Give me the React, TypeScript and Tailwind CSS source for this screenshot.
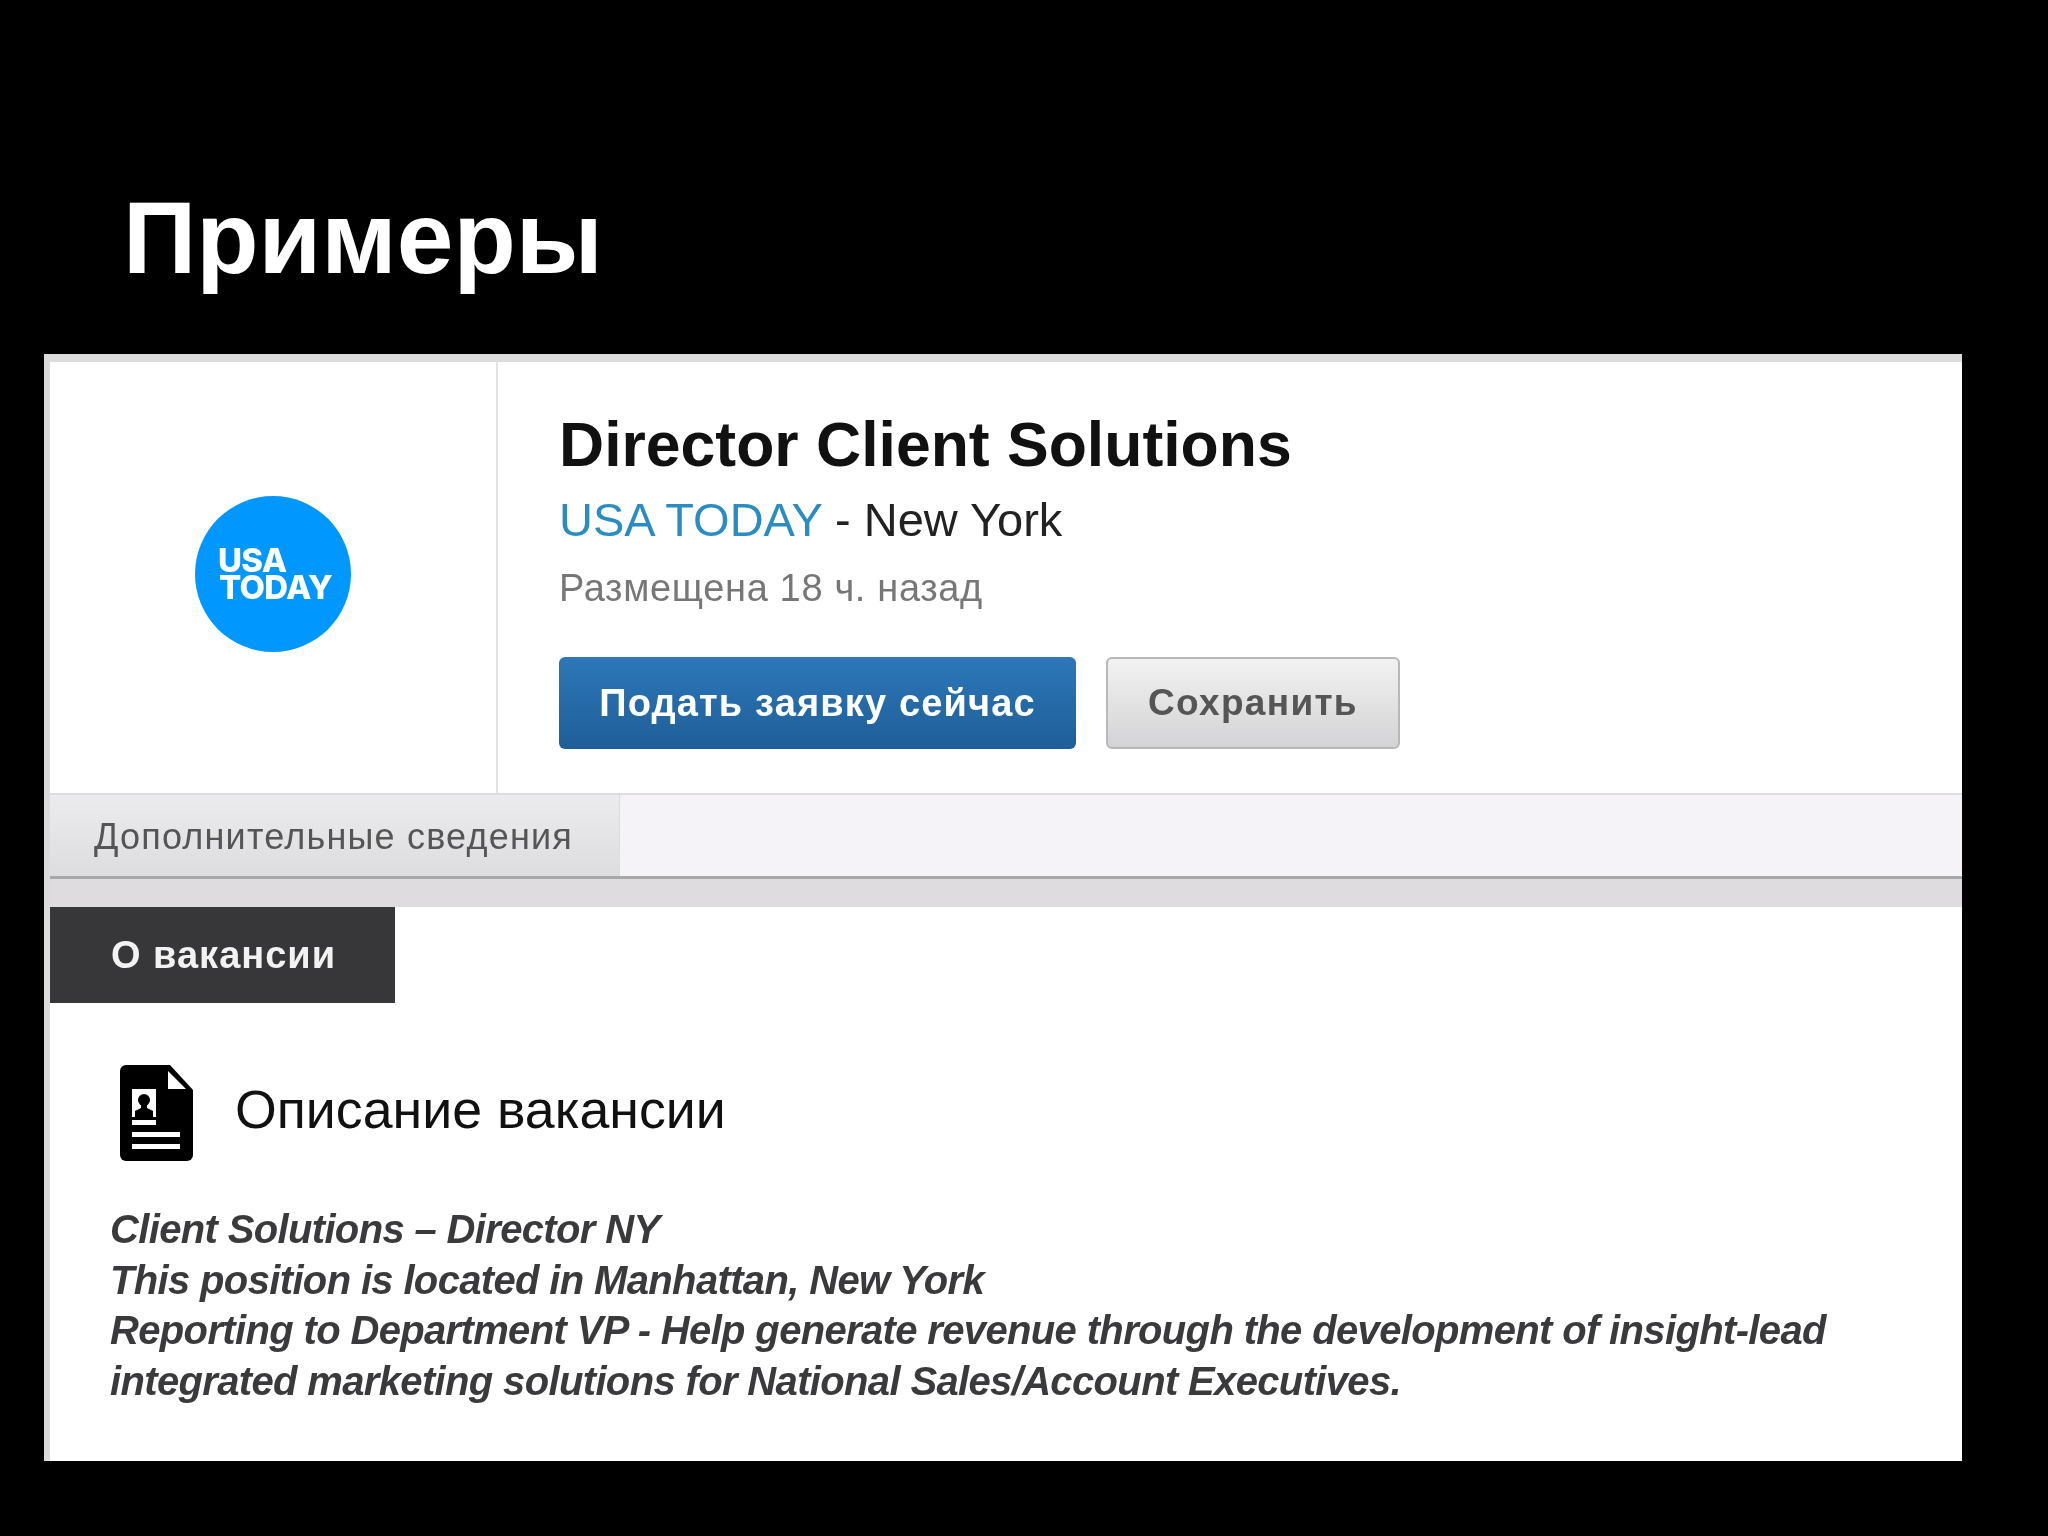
import React from 'react';

const sans = 'font-["Liberation_Sans",Arial,sans-serif]';

const ResumeIcon: React.FC = () => (
  <svg className="w-[74px] h-[96px] shrink-0" viewBox="0 0 74 96">
    <path d="M6 0H50L73 25V90a6 6 0 0 1-6 6H6a6 6 0 0 1-6-6V6a6 6 0 0 1 6-6Z" fill="#000" />
    <path d="M48 6V24H66Z" fill="#fff" />
    <rect x="12" y="24" width="24" height="28" fill="#fff" />
    <circle cx="24" cy="35" r="6" fill="#000" />
    <path d="M21 39h6v4l6 3v6H15v-6l6-3Z" fill="#000" />
    <rect x="12" y="55" width="24" height="5" fill="#fff" />
    <rect x="12" y="67" width="48" height="5" fill="#fff" />
    <rect x="12" y="79" width="48" height="5" fill="#fff" />
  </svg>
);

const App: React.FC = () => {
  return (
    <div className={`w-[2048px] h-[1536px] bg-black flex flex-col overflow-hidden ${sans}`}>
      <div className="h-[354px] shrink-0 pl-[123px] pt-[175px]">
        <h1 className="text-[102px] leading-[126px] font-bold text-white">Примеры</h1>
      </div>

      <div className="ml-[44px] w-[1918px] h-[1107px] bg-white border-l-[6px] border-t-[8px] border-[#dcdcdc] flex flex-col blur-[0.6px]">
        {/* Job header */}
        <div className="h-[433px] flex shrink-0 border-b-2 border-[#dddddd]">
          <div className="w-[448px] shrink-0 border-r-2 border-[#e2e2e4] flex items-center justify-center pb-[7px]">
            <div className="w-[156px] h-[156px] rounded-full bg-[#0098fe] flex flex-col justify-center pl-[23px] font-['Inter',sans-serif] font-extrabold text-white text-[33px] leading-[27px] tracking-[-0.7px]">
              <span>USA</span>
              <span className="pl-[1px]">TODAY</span>
            </div>
          </div>
          <div className="pl-[61px] pt-[46px] flex flex-col">
            <h2 className="text-[62.5px] leading-[72px] font-bold text-[#111]">Director Client Solutions</h2>
            <p className="mt-[12px] text-[47px] leading-[56px] text-[#222]">
              <span className="text-[#2b8cc4]">USA TODAY</span> - New York
            </p>
            <p className="mt-[17px] text-[38px] leading-[46px] text-[#777] tracking-[0.65px]">Размещена 18 ч. назад</p>
            <div className="mt-[46px] flex gap-[30px]">
              <button className="w-[517px] h-[92px] rounded-[6px] bg-gradient-to-b from-[#2d78b9] to-[#1e5e98] text-white font-bold text-[38px] tracking-[1.15px]">
                Подать заявку сейчас
              </button>
              <button className="w-[294px] h-[92px] rounded-[6px] border-2 border-[#b8b8b8] bg-gradient-to-b from-[#f2f2f2] to-[#d3d3d5] text-[#555] font-bold text-[37px] tracking-[1.3px]">
                Сохранить
              </button>
            </div>
          </div>
        </div>

        {/* Tab bar */}
        <div className="h-[81px] shrink-0 bg-[#f5f3f7] flex">
          <div className="w-[570px] bg-gradient-to-b from-[#ececee] to-[#dddddf] border-r border-[#dcdcdc] pl-[44px] pt-[3px] flex items-center text-[36px] text-[#555] tracking-[1.2px]">
            Дополнительные сведения
          </div>
        </div>
        <div className="h-[31px] shrink-0 border-t-[3px] border-[#a8a8a8] bg-[#dedcdf]" />

        {/* Description */}
        <div className="w-[345px] h-[96px] shrink-0 bg-[#373638] flex items-center pl-[61px] text-[38px] font-bold text-[#f2f2f2] tracking-[1px]">
          О вакансии
        </div>
        <div className="mt-[62px] ml-[70px] flex items-center gap-[41px]">
          <ResumeIcon />
          <h3 className="text-[53.7px] leading-[60px] text-[#111] pb-[8px]">Описание вакансии</h3>
        </div>
        <div className="mt-[43px] ml-[60px] w-[1780px] text-[40px] leading-[50.6px] font-bold italic text-[#3a3a3c] tracking-[-0.65px]">
          <p>Client Solutions – Director NY</p>
          <p>This position is located in Manhattan, New York</p>
          <p>Reporting to Department VP - Help generate revenue through the development of insight-lead</p>
          <p>integrated marketing solutions for National Sales/Account Executives.</p>
        </div>
      </div>
    </div>
  );
};

export default App;
